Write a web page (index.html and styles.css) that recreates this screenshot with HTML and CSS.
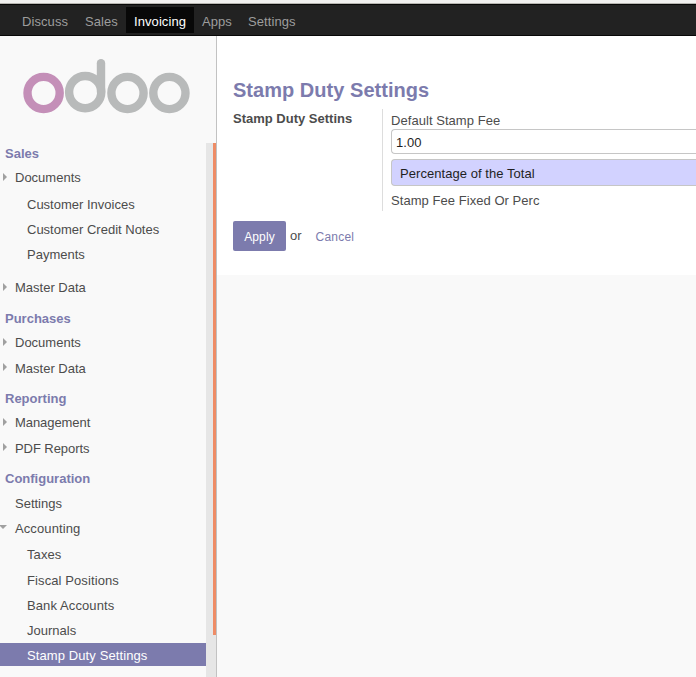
FILE: index.html
```
<!DOCTYPE html>
<html lang="en">
<head>
<meta charset="utf-8">
<title>Stamp Duty Settings</title>
<link rel="stylesheet" href="styles.css">
</head>
<body>
<nav class="topbar">
  <a class="w63">Discuss</a><a class="w49">Sales</a><a class="active">Invoicing</a><a class="w46">Apps</a><a>Settings</a>
</nav>
<div class="layout">
  <aside class="sidebar">
    <div class="brand">
      <svg class="logo" width="168" height="56" viewBox="0 0 168 56" fill="none" stroke-width="8.4">
        <circle cx="20.6" cy="35" r="16.1" stroke="#c48fb8"/>
        <g stroke="#b8baba">
          <circle cx="62.2" cy="34.1" r="16.1"/>
          <path d="M78 34V5.2" stroke-linecap="round"/>
          <circle cx="104.5" cy="35" r="16.1"/>
          <circle cx="146.4" cy="35" r="16.1"/>
        </g>
      </svg>
    </div>
    <div class="menu-wrap">
      <div class="menu">
        <h4 class="section first">Sales</h4>
        <a class="item folded g1">Documents</a>
        <a class="item sub g4">Customer Invoices</a>
        <a class="item sub g2">Customer Credit Notes</a>
        <a class="item sub g2">Payments</a>
        <a class="item folded g10">Master Data</a>
        <h4 class="section g8">Purchases</h4>
        <a class="item folded g1">Documents</a>
        <a class="item folded high g3">Master Data</a>
        <h4 class="section g7">Reporting</h4>
        <a class="item folded tight g1">Management</a>
        <a class="item folded high tight g3">PDF Reports</a>
        <h4 class="section g7">Configuration</h4>
        <a class="item g2">Settings</a>
        <a class="item unfolded loose g2">Accounting</a>
        <a class="item sub loose g3">Taxes</a>
        <a class="item sub loose g3">Fiscal Positions</a>
        <a class="item sub loose g2">Bank Accounts</a>
        <a class="item sub g2">Journals</a>
        <a class="item sub loose selected g2">Stamp Duty Settings</a>
      </div>
      <div class="track"><div class="thumb"></div></div>
    </div>
  </aside>
  <main class="content">
    <section class="sheet">
      <h1>Stamp Duty Settings</h1>
      <div class="group">
        <div class="group-label">Stamp Duty Settins</div>
        <div class="fields">
          <label>Default Stamp Fee</label>
          <div class="input">1.00</div>
          <div class="select">Percentage of the Total</div>
          <label class="after">Stamp Fee Fixed Or Perc</label>
        </div>
      </div>
      <div class="actions">
        <button>Apply</button><span class="or">or</span><a class="cancel">Cancel</a>
      </div>
    </section>
  </main>
</div>
</body>
</html>
```
FILE: styles.css
```
* { box-sizing: border-box; }
body {
  margin: 0;
  height: 677px;
  overflow: hidden;
  display: flex;
  flex-direction: column;
  background: #f9f9f9;
  color: #4c4c4c;
  font: 13px/23px "Liberation Sans", Arial, sans-serif;
}
.topbar {
  flex: none;
  height: 36px;
  display: flex;
  padding: 4px 0 0 14px;
  border-top: 3px solid #f2f1f0;
  background: linear-gradient(#b8b6b2 0 1px, #080808 1px 2px, #222 2px 32px, #080808 32px);
}
.topbar a {
  height: 26px;
  line-height: 30px;
  padding: 0 8px;
  letter-spacing: 0.08px;
  color: #9d9d9d;
}
.topbar .w63 { width: 63px; }
.topbar .w49 { width: 49px; }
.topbar .w46 { width: 46px; }
.topbar .active { width: 68px; background: #080808; color: #fff; }
.layout { flex: 1; display: flex; min-height: 0; }
.sidebar {
  width: 217px;
  flex: none;
  display: flex;
  flex-direction: column;
  border-right: 1px solid #c2c2c2;
}
.brand { height: 107px; flex: none; padding: 22px 0 0 23px; }
.logo { display: block; }
.menu-wrap { flex: 1; display: flex; min-height: 0; }
.menu { width: 206px; }
.track { width: 10px; background: #e6e6e6; }
.thumb { width: 3px; height: 492px; margin-left: 7px; background: #ee8c66; }
.section {
  height: 23px;
  margin: 0;
  padding-left: 5px;
  line-height: 26px;
  font-size: 13px;
  color: #7c7bad;
}
.section.first { margin-top: -2px; }
.item {
  display: flex;
  align-items: center;
  height: 23px;
  padding: 2px 0 0 15px;
}
.sub { padding-left: 27px; }
.tight { letter-spacing: -0.07px; }
.loose { letter-spacing: 0.1px; }
.selected { background: #7c7bad; color: #fff; }
.folded, .unfolded { padding-left: 0; }
.folded::before {
  content: "";
  margin: 0 8px 2px 3px;
  border: 4px solid transparent;
  border-right: 0;
  border-left-color: #a0a0a0;
}
.folded.high::before { margin-bottom: 4px; }
.unfolded::before {
  content: "";
  margin: 0 8px 4px -1px;
  border: 4px solid transparent;
  border-bottom: 0;
  border-top-color: #a0a0a0;
}
.g1 { margin-top: 1px; }
.g2 { margin-top: 2px; }
.g3 { margin-top: 3px; }
.g4 { margin-top: 4px; }
.g7 { margin-top: 7px; }
.g8 { margin-top: 8px; }
.g10 { margin-top: 10px; }
.content { flex: 1; min-width: 0; }
.sheet { height: 239px; padding: 40px 0 0 16px; background: #fff; }
h1 { margin: 0; font-size: 20px; line-height: 28px; letter-spacing: 0.03px; color: #7c7bad; }
.group { display: flex; height: 102px; margin-top: 5px; }
.group-label { width: 149px; font-weight: bold; line-height: 20px; }
.fields {
  flex: 1;
  display: flex;
  flex-direction: column;
  border-left: 1px solid #ddd;
  padding-left: 8px;
  letter-spacing: 0.05px;
}
.fields label { height: 20px; line-height: 24px; }
.input, .select { border: 1px solid #c6c6c6; border-right: 0; border-radius: 4px 0 0 4px; }
.input { height: 25px; padding-left: 4px; line-height: 26px; color: #1f1f1f; }
.select { height: 27px; margin-top: 5px; padding-left: 8px; line-height: 28px; background: #d2d2ff; color: #1f1f1f; }
.fields .after { margin-top: 3px; }
.actions { display: flex; margin-top: 10px; }
button {
  width: 53px;
  height: 30px;
  padding: 2px 0 0;
  border: 0;
  border-radius: 2px;
  background: #7c7bad;
  color: #fff;
  font: 12px "Liberation Sans", Arial, sans-serif;
  letter-spacing: 0.1px;
}
.or { margin-left: 4px; line-height: 30px; }
.cancel { margin-left: 14px; font-size: 12px; line-height: 32px; letter-spacing: 0.2px; color: #7c7bad; }
```
